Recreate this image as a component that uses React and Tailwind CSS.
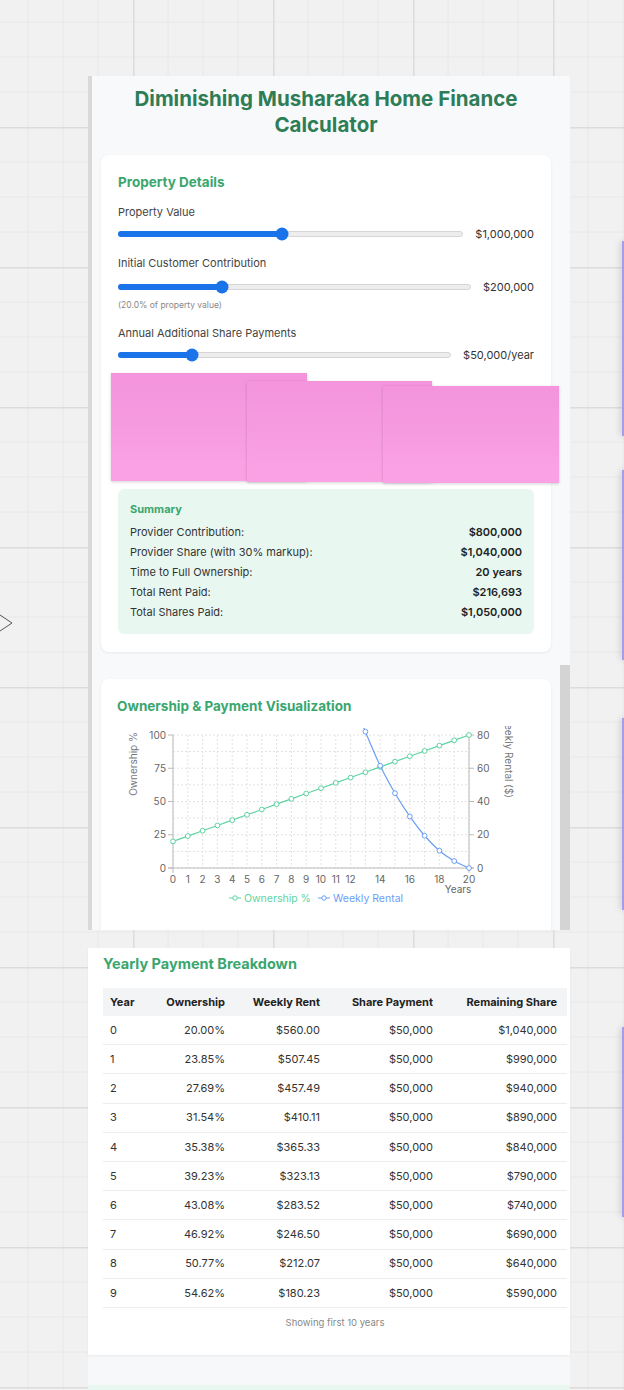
import React from 'react';

const sliders = [
  { label: 'Property Value', value: '$1,000,000', pct: 47.5, gap: 'mt-[14px]', sgap: 'mt-[7px]' },
  { label: 'Initial Customer Contribution', value: '$200,000', pct: 29.4, gap: 'mt-[14px]', sgap: 'mt-[9px]', note: '(20.0% of property value)' },
  { label: 'Annual Additional Share Payments', value: '$50,000/year', pct: 22, gap: 'mt-[15px]', sgap: 'mt-[7px]' },
];

const summary = [
  ['Provider Contribution:', '$800,000'],
  ['Provider Share (with 30% markup):', '$1,040,000'],
  ['Time to Full Ownership:', '20 years'],
  ['Total Rent Paid:', '$216,693'],
  ['Total Shares Paid:', '$1,050,000'],
];

const rows = [
  ['0', '20.00%', '$560.00', '$50,000', '$1,040,000'],
  ['1', '23.85%', '$507.45', '$50,000', '$990,000'],
  ['2', '27.69%', '$457.49', '$50,000', '$940,000'],
  ['3', '31.54%', '$410.11', '$50,000', '$890,000'],
  ['4', '35.38%', '$365.33', '$50,000', '$840,000'],
  ['5', '39.23%', '$323.13', '$50,000', '$790,000'],
  ['6', '43.08%', '$283.52', '$50,000', '$740,000'],
  ['7', '46.92%', '$246.50', '$50,000', '$690,000'],
  ['8', '50.77%', '$212.07', '$50,000', '$640,000'],
  ['9', '54.62%', '$180.23', '$50,000', '$590,000'],
];

// weekly rent per year (chart right axis, 0-80)
const rent = [560, 507.45, 457.49, 410.11, 365.33, 323.13, 283.52, 246.5, 212.07, 180.23, 150.98, 124.32, 104, 82, 61.5, 45, 31, 19.4, 10.4, 4.2, 0];

const X = (i) => 56 + i * 14.8;
const YL = (v) => 142 - v * 1.33;
const YR = (v) => 142 - (v / 80) * 133;

const smooth = (pts) => {
  let d = `M${pts[0][0]},${pts[0][1]}`;
  for (let i = 0; i < pts.length - 1; i++) {
    const p0 = pts[i - 1] || pts[i];
    const p1 = pts[i];
    const p2 = pts[i + 1];
    const p3 = pts[i + 2] || p2;
    const c1 = [p1[0] + (p2[0] - p0[0]) / 6, p1[1] + (p2[1] - p0[1]) / 6];
    const c2 = [p2[0] - (p3[0] - p1[0]) / 6, p2[1] - (p3[1] - p1[1]) / 6];
    d += ` C${c1[0]},${c1[1]} ${c2[0]},${c2[1]} ${p2[0]},${p2[1]}`;
  }
  return d;
};

function CanvasGrid() {
  return (
    <svg className="absolute inset-0" width="624" height="1390">
      <defs>
        <pattern id="grid" x="133" y="127" width="140" height="140" patternUnits="userSpaceOnUse">
          <path d="M35 0V140M70 0V140M105 0V140M0 35H140M0 70H140M0 105H140" stroke="#e8e8e8" strokeWidth="1" fill="none" />
          <path d="M0.75 0V140M0 0.75H140" stroke="#dcdcdc" strokeWidth="1.5" fill="none" />
        </pattern>
      </defs>
      <rect width="624" height="1390" fill="url(#grid)" />
      <polyline points="0,615 12,623 0,631" fill="none" stroke="#555" strokeWidth="1" />
    </svg>
  );
}

function Slider({ label, value, pct, note, gap, sgap }) {
  return (
    <div>
      <div className={`${gap} text-[11px] leading-[14px] text-[#444]`}>{label}</div>
      <div className={`${sgap} flex h-[16px] items-center gap-3`}>
        <div className="relative h-[6px] flex-1 rounded-full border border-[#d6d6d6] bg-[#ededed]">
          <div className="absolute -left-px -top-px h-[6px] rounded-full bg-[#1a73e8]" style={{ width: `${pct}%` }} />
          <div
            className="absolute top-1/2 h-[13px] w-[13px] -translate-x-1/2 -translate-y-1/2 rounded-full bg-[#1a73e8]"
            style={{ left: `${pct}%` }}
          />
        </div>
        <span className="text-[11px] text-[#333]">{value}</span>
      </div>
      {note && <div className="mt-[4px] text-[8.5px] leading-[12px] text-[#888]">{note}</div>}
    </div>
  );
}

function Chart() {
  const own = Array.from({ length: 21 }, (_, i) => [X(i), YL(20 + i * 4)]);
  const rentPts = rent.map((v, i) => [X(i), YR(v)]).slice(11);
  const xLabels = [0, 1, 2, 3, 4, 5, 6, 7, 8, 9, 10, 11, 12, 14, 16, 18, 20];
  return (
    <svg width="418" height="192" className="mt-[11px] block text-[10px]">
      <defs>
        <clipPath id="plot">
          <rect x="0" y="2" width="418" height="190" />
        </clipPath>
      </defs>
      {Array.from({ length: 21 }, (_, i) => (
        <line key={i} x1={X(i)} x2={X(i)} y1="9" y2="142" stroke="#e2e2e2" strokeDasharray="2 2" />
      ))}
      {Array.from({ length: 9 }, (_, i) => (
        <line key={i} x1="56" x2="352" y1={9 + i * 16.625} y2={9 + i * 16.625} stroke="#e2e2e2" strokeDasharray="2 2" />
      ))}
      <line x1="56" x2="56" y1="9" y2="147" stroke="#bbb" />
      <line x1="352" x2="352" y1="9" y2="147" stroke="#bbb" />
      <line x1="51" x2="357" y1="142" y2="142" stroke="#bbb" />
      {[100, 75, 50, 25, 0].map((v) => (
        <g key={v}>
          <line x1="51" x2="56" y1={YL(v)} y2={YL(v)} stroke="#bbb" />
          <text x="49" y={YL(v) + 3.5} textAnchor="end" fill="#666">{v}</text>
        </g>
      ))}
      {[80, 60, 40, 20, 0].map((v) => (
        <g key={v}>
          <line x1="352" x2="357" y1={YR(v)} y2={YR(v)} stroke="#bbb" />
          <text x="360" y={YR(v) + 3.5} fill="#666">{v}</text>
        </g>
      ))}
      {xLabels.map((v) => (
        <text key={v} x={X(v)} y="157" textAnchor="middle" fill="#666">{v}</text>
      ))}
      <text x="341" y="166.5" textAnchor="middle" fill="#666">Years</text>
      <text transform="translate(20 38) rotate(-90)" textAnchor="middle" fill="#777">Ownership %</text>
      <text transform="translate(388 72) rotate(90)" textAnchor="end" fill="#777">Weekly Rental ($)</text>

      <polyline points={own.map((p) => p.join(',')).join(' ')} fill="none" stroke="#5fd3a2" strokeWidth="1.2" />
      {own.map((p, i) => (
        <circle key={i} cx={p[0]} cy={p[1]} r="2.4" fill="#fff" stroke="#5fd3a2" strokeWidth="1" />
      ))}
      <g clipPath="url(#plot)">
        <path d={smooth(rentPts)} fill="none" stroke="#6b9ef5" strokeWidth="1.2" />
        {rentPts.map((p, i) => (
          <circle key={i} cx={p[0]} cy={p[1]} r="2.4" fill="#fff" stroke="#6b9ef5" strokeWidth="1" />
        ))}
      </g>

      <line x1="112" x2="124" y1="172" y2="172" stroke="#5fd3a2" />
      <circle cx="118" cy="172" r="2.2" fill="#fff" stroke="#5fd3a2" />
      <text x="127" y="175.5" fill="#5fd3a2" className="text-[10.5px]">Ownership %</text>
      <line x1="201" x2="213" y1="172" y2="172" stroke="#6b9ef5" />
      <circle cx="207" cy="172" r="2.2" fill="#fff" stroke="#6b9ef5" />
      <text x="216" y="175.5" fill="#6b9ef5" className="text-[10.5px]">Weekly Rental</text>
    </svg>
  );
}

function Sticky({ className }) {
  return (
    <div className={`absolute bg-gradient-to-b from-[#f394dc] to-[#fba2e6] shadow-[0_1px_3px_rgba(0,0,0,0.18)] ${className}`} />
  );
}

function SideCard({ className }) {
  return <div className={`absolute left-[622px] w-[12px] border-l-2 border-[#a89be8] bg-white shadow-[-2px_0_6px_rgba(0,0,0,0.12)] ${className}`} />;
}

const cols = 'grid grid-cols-[57px_75px_95px_113px_124px] items-center';

export default function App() {
  return (
    <div className="relative h-[1390px] w-[624px] overflow-hidden bg-[#f1f1f1] font-[family-name:Inter,sans-serif] text-[#333]">
      <CanvasGrid />

      <SideCard className="top-[241px] h-[195px]" />
      <SideCard className="top-[470px] h-[190px]" />
      <SideCard className="top-[718px] h-[192px]" />
      <SideCard className="top-[1027px] h-[190px]" />

      {/* main calculator frame */}
      <div className="absolute left-[88px] top-[76px] flex h-[854px] w-[482px] overflow-hidden border-l-4 border-[#d9d9d9] bg-[#f8f9fa]">
        <div className="flex-1 px-[9px]">
          <h1 className="mt-[10px] text-center text-[20.5px] font-bold leading-[26px] text-[#2e7d57]">
            Diminishing Musharaka Home Finance
            <br />
            Calculator
          </h1>

          <div className="mt-[17px] rounded-lg bg-white px-[17px] pb-[18px] pt-[18px] shadow-[0_1px_3px_rgba(0,0,0,0.07)]">
            <h2 className="text-[13.5px] font-bold leading-[18px] text-[#3aa66e]">Property Details</h2>
            {sliders.map((s) => (
              <Slider key={s.label} {...s} />
            ))}
            <div className="mt-[126px] rounded-md bg-[#e8f8f0] px-[12px] pb-[12px] pt-[13px]">
              <div className="text-[11px] font-bold leading-[14px] text-[#3aa66e]">Summary</div>
              <div className="mt-[6px]">
                {summary.map(([k, v]) => (
                  <div key={k} className="flex h-[20px] items-center justify-between text-[11px]">
                    <span className="text-[#333]">{k}</span>
                    <span className="font-semibold text-[#222]">{v}</span>
                  </div>
                ))}
              </div>
            </div>
          </div>

          <div className="mt-[27px] rounded-lg bg-white px-[16px] pb-[40px] pt-[18px] shadow-[0_1px_3px_rgba(0,0,0,0.07)]">
            <h2 className="text-[13.5px] font-bold leading-[18px] text-[#3aa66e]">Ownership &amp; Payment Visualization</h2>
            <Chart />
          </div>
        </div>
        <div className="flex w-[10px] flex-col">
          <div className="mt-[589px] flex-1 bg-[#d4d4d4]" />
        </div>
      </div>

      {/* table frame */}
      <div className="absolute left-[88px] top-[948px] flex h-[442px] w-[482px] flex-col bg-[#f7f8fa]">
        <div className="h-[407px] bg-white pl-[15px] pr-[3px] pt-[8px] shadow-[0_1px_2px_rgba(0,0,0,0.06)]">
          <h2 className="text-[14.5px] font-bold leading-[16px] text-[#3aa66e]">Yearly Payment Breakdown</h2>
          <div className="mt-[16px] text-[11px]">
            <div className={`${cols} h-[28px] bg-[#f3f4f6] font-bold text-[#222]`}>
              <span className="pl-[7px]">Year</span>
              <span className="pr-[10px] text-right">Ownership</span>
              <span className="pr-[10px] text-right">Weekly Rent</span>
              <span className="pr-[10px] text-right">Share Payment</span>
              <span className="pr-[10px] text-right">Remaining Share</span>
            </div>
            {rows.map((r) => (
              <div key={r[0]} className={`${cols} h-[29.2px] border-b border-[#ececec] text-[#333]`}>
                <span className="pl-[7px]">{r[0]}</span>
                <span className="pr-[10px] text-right">{r[1]}</span>
                <span className="pr-[10px] text-right">{r[2]}</span>
                <span className="pr-[10px] text-right">{r[3]}</span>
                <span className="pr-[10px] text-right">{r[4]}</span>
              </div>
            ))}
            <div className="mt-[8px] text-center text-[9.5px] leading-[14px] text-[#888]">Showing first 10 years</div>
          </div>
        </div>
        <div className="mt-[30px] h-[5px] bg-[#e8f8f0]" />
      </div>

      <Sticky className="left-[111px] top-[373px] h-[108px] w-[196px]" />
      <Sticky className="left-[247px] top-[381px] h-[101px] w-[185px]" />
      <Sticky className="left-[383px] top-[386px] h-[97px] w-[176px]" />
    </div>
  );
}
